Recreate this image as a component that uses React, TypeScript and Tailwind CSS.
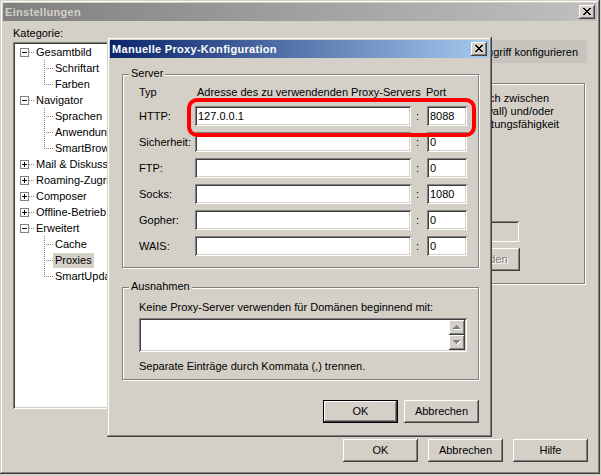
import type { ReactNode } from 'react';
import clsx from 'clsx';

const raised =
    'shadow-[inset_-1px_-1px_#404040,inset_1px_1px_#ffffff,inset_-2px_-2px_#808080,inset_2px_2px_#d4d0c8]';
const frame =
    'shadow-[inset_-1px_-1px_#404040,inset_1px_1px_#d4d0c8,inset_-2px_-2px_#808080,inset_2px_2px_#ffffff]';
const sunken =
    'shadow-[inset_1px_1px_#808080,inset_-1px_-1px_#ffffff,inset_2px_2px_#404040,inset_-2px_-2px_#d4d0c8]';
const etched = 'border border-[#808080] shadow-[inset_1px_1px_#ffffff,1px_1px_#ffffff]';

const X_ROWS = ['11000011', '01100110', '00111100', '00011000', '00111100', '01100110', '11000011'];

function Pixels({ rows, fill, dx = 0, dy = 0 }: { rows: string[]; fill: string; dx?: number; dy?: number }) {
    return (
        <>
            {rows.flatMap((row, y) =>
                [...row].map((c, x) =>
                    c === '1' ? (
                        <rect key={`${fill}-${x}-${y}`} x={x + dx} y={y + dy} width="1" height="1" fill={fill} />
                    ) : null,
                ),
            )}
        </>
    );
}

function CloseButton() {
    return (
        <div className={clsx('flex h-[14px] w-[16px] shrink-0 items-center justify-center bg-[#d4d0c8] pb-[1px]', raised)}>
            <svg width="8" height="7" shapeRendering="crispEdges">
                <Pixels rows={X_ROWS} fill="#000" />
            </svg>
        </div>
    );
}

function TitleBar({ title, active }: { title: string; active?: boolean }) {
    return (
        <div
            className={clsx(
                'flex h-[18px] items-center justify-between pr-[2px] pl-[2px] font-bold tracking-[0.3px]',
                active
                    ? 'bg-[linear-gradient(to_right,#0a246a,#a6caf0)] text-white'
                    : 'bg-[linear-gradient(to_right,#808080,#c0c0c0)] text-[#d4d0c8]',
            )}
        >
            <span className="leading-[18px]">{title}</span>
            <CloseButton />
        </div>
    );
}

function Button({
    children,
    isDefault,
    disabled,
}: {
    children: ReactNode;
    isDefault?: boolean;
    disabled?: boolean;
}) {
    return (
        <div className={clsx('h-[23px] w-[75px] bg-[#d4d0c8]', isDefault && 'border border-black')}>
            <div
                className={clsx(
                    'flex h-full w-full items-center justify-center',
                    raised,
                    disabled && 'text-[#808080] [text-shadow:1px_1px_#ffffff]',
                )}
            >
                {children}
            </div>
        </div>
    );
}

function Group({ label, className, children }: { label: string; className?: string; children: ReactNode }) {
    return (
        <div className={clsx('relative', etched, className)}>
            <span className="absolute -top-[8px] left-[6px] bg-[#d4d0c8] px-[2px] leading-[13px]">{label}</span>
            {children}
        </div>
    );
}

function Field({ value, className }: { value?: string; className?: string }) {
    return (
        <div className={clsx('flex h-[20px] items-center bg-white pl-[3px]', sunken, className)}>{value}</div>
    );
}

type Node = { label: string; level: 0 | 1; box?: 'minus' | 'plus'; last?: boolean; selected?: boolean };

const tree: Node[] = [
    { label: 'Gesamtbild', level: 0, box: 'minus' },
    { label: 'Schriftart', level: 1 },
    { label: 'Farben', level: 1, last: true },
    { label: 'Navigator', level: 0, box: 'minus' },
    { label: 'Sprachen', level: 1 },
    { label: 'Anwendungen', level: 1 },
    { label: 'SmartBrowsing', level: 1, last: true },
    { label: 'Mail & Diskussionsforen', level: 0, box: 'plus' },
    { label: 'Roaming-Zugriff', level: 0, box: 'plus' },
    { label: 'Composer', level: 0, box: 'plus' },
    { label: 'Offline-Betrieb', level: 0, box: 'plus' },
    { label: 'Erweitert', level: 0, box: 'minus' },
    { label: 'Cache', level: 1 },
    { label: 'Proxies', level: 1, selected: true },
    { label: 'SmartUpdate', level: 1, last: true },
];

function dots(x0: number, y0: number, x1: number, y1: number) {
    const out: ReactNode[] = [];
    for (let x = x0; x <= x1; x += 2) {
        for (let y = y0; y <= y1; y += 2) {
            out.push(<rect key={`${x}-${y}`} x={x} y={y} width="1" height="1" fill="#808080" />);
        }
    }
    return out;
}

function TreeRow({ node }: { node: Node }) {
    return (
        <div className="flex h-[16px] items-center overflow-hidden whitespace-nowrap">
            {node.level === 0 ? (
                <svg width="19" height="16" shapeRendering="crispEdges" className="shrink-0">
                    <rect x="5.5" y="4.5" width="8" height="8" fill="#fff" stroke="#808080" />
                    <rect x="7" y="8" width="5" height="1" fill="#000" />
                    {node.box === 'plus' && <rect x="9" y="6" width="1" height="5" fill="#000" />}
                    {dots(14, 8, 18, 8)}
                </svg>
            ) : (
                <svg width="38" height="16" shapeRendering="crispEdges" className="shrink-0">
                    {dots(29, 0, 29, node.last ? 8 : 15)}
                    {dots(31, 8, 37, 8)}
                </svg>
            )}
            <span className={clsx('px-[2px] leading-[15px]', node.selected && 'bg-[#d4d0c8]')}>{node.label}</span>
        </div>
    );
}

function ScrollArrow({ down }: { down?: boolean }) {
    const rows = down ? ['1111111', '0111110', '0011100', '0001000'] : ['0001000', '0011100', '0111110', '1111111'];
    return (
        <div className={clsx('flex h-[15px] w-[16px] items-center justify-center bg-[#d4d0c8]', raised)}>
            <svg width="8" height="5" shapeRendering="crispEdges">
                <Pixels rows={rows} fill="#ffffff" dx={1} dy={1} />
                <Pixels rows={rows} fill="#808080" />
            </svg>
        </div>
    );
}

const proxies = [
    { type: 'HTTP:', host: '127.0.0.1', port: '8088' },
    { type: 'Sicherheit:', host: '', port: '0' },
    { type: 'FTP:', host: '', port: '0' },
    { type: 'Socks:', host: '', port: '1080' },
    { type: 'Gopher:', host: '', port: '0' },
    { type: 'WAIS:', host: '', port: '0' },
];

function ProxyDialog() {
    return (
        <div className={clsx('absolute top-[37px] left-[107px] h-[400px] w-[385px] bg-[#d4d0c8] p-[3px]', frame)}>
            <TitleBar title="Manuelle Proxy-Konfiguration" active />
            <div className="pl-[12px]">
                <Group label="Server" className="mt-[16px] h-[194px] w-[357px] pt-[11px] pl-[16px]">
                    <div className="mb-[7px] flex h-[13px] leading-[13px]">
                        <span className="w-[56px]">Typ</span>
                        <span className="w-[231px] pl-[2px]">Adresse des zu verwendenden Proxy-Servers</span>
                        <span>Port</span>
                    </div>
                    <div className="flex flex-col gap-[6px]">
                        {proxies.map((p) => (
                            <div key={p.type} className="flex h-[20px] items-center">
                                <span className="w-[56px]">{p.type}</span>
                                <Field value={p.host} className="w-[216px]" />
                                <span className="w-[16px] pl-[5px]">:</span>
                                <Field value={p.port} className="w-[40px]" />
                            </div>
                        ))}
                    </div>
                </Group>
                <Group label="Ausnahmen" className="mt-[19px] h-[93px] w-[357px] pt-[13px] pl-[16px]">
                    <div className="h-[13px] leading-[13px]">Keine Proxy-Server verwenden für Domänen beginnend mit:</div>
                    <div className={clsx('mt-[4px] flex h-[34px] w-[328px] justify-end bg-white p-[2px]', sunken)}>
                        <div className="flex flex-col">
                            <ScrollArrow />
                            <ScrollArrow down />
                        </div>
                    </div>
                    <div className="mt-[8px] h-[13px] leading-[13px]">Separate Einträge durch Kommata (,) trennen.</div>
                </Group>
                <div className="mt-[20px] flex w-[357px] justify-end gap-[6px]">
                    <Button isDefault>OK</Button>
                    <Button>Abbrechen</Button>
                </div>
            </div>
            <div className="absolute top-[61px] left-[80px] h-[39px] w-[289px] rounded-[10px] border-[4px] border-[#ff0000]" />
        </div>
    );
}

export default function App() {
    return (
        <div className="h-[476px] w-[601px] bg-[#d4d0c8] font-['Liberation_Sans',Arial,sans-serif] text-[11px] text-black">
            <div className={clsx('relative h-[474px] w-[600px] bg-[#d4d0c8] p-[3px]', frame)}>
                <TitleBar title="Einstellungen" />
                <div className="flex pt-[6px] pl-[10px]">
                    <div className="w-[150px]">
                        <div className="mb-[2px] h-[13px] leading-[13px]">Kategorie:</div>
                        <div className={clsx('h-[367px] w-[96px] overflow-hidden bg-white p-[2px]', sunken)}>
                            {tree.map((n) => (
                                <TreeRow key={n.label} node={n} />
                            ))}
                        </div>
                    </div>
                    <div className="ml-[7px] w-[417px] pt-[13px]">
                        <div className="flex h-[23px] items-center justify-end bg-[#c6c3bd] pt-[2px] pr-[9px] whitespace-nowrap">
                            Netzwerkzugriff konfigurieren
                        </div>
                        <div className={clsx('mt-[20px] flex h-[201px] w-[415px] flex-col items-end pt-[8px]', etched)}>
                            <div className="mr-[35px] leading-[13px] whitespace-nowrap">sich zwischen</div>
                            <div className="mr-[30px] leading-[13px] whitespace-nowrap">(Firewall) und/oder</div>
                            <div className="mr-[25px] leading-[13px] whitespace-nowrap">Leistungsfähigkeit</div>
                            <div className={clsx('mt-[90px] mr-[65px] h-[21px] w-[300px] bg-[#d4d0c8]', sunken)} />
                            <div className="mt-[6px] mr-[64px]">
                                <Button disabled>Neu laden</Button>
                            </div>
                        </div>
                    </div>
                </div>
                <div className="mt-[30px] flex justify-end gap-[10px] pr-[9px]">
                    <Button>OK</Button>
                    <Button>Abbrechen</Button>
                    <Button>Hilfe</Button>
                </div>
                <ProxyDialog />
            </div>
        </div>
    );
}
